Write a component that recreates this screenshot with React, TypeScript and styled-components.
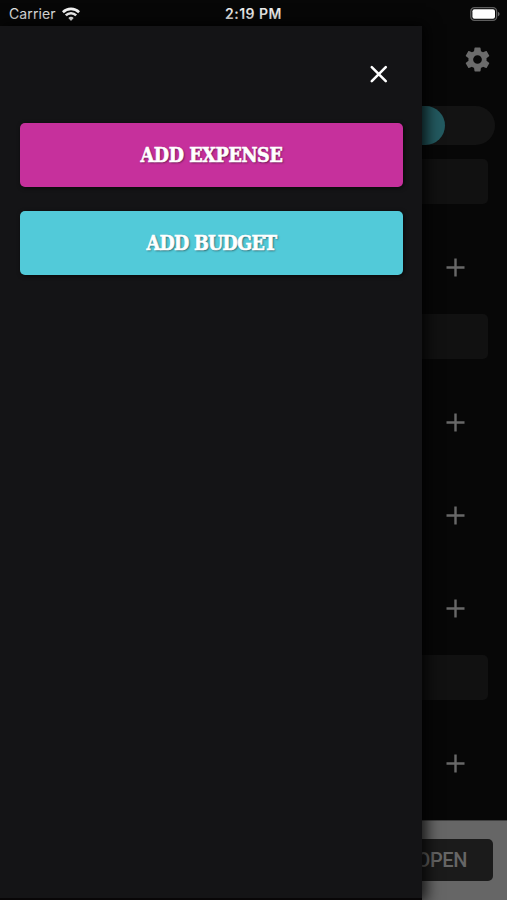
import React from "react";
import styled, { createGlobalStyle } from "styled-components";

const GlobalStyle = createGlobalStyle`
  * { box-sizing: border-box; }
  body { margin: 0; background: #070707; overflow: hidden; }
  button { font: inherit; border: 0; padding: 0; margin: 0; }
  svg { display: block; }
`;

const Screen = styled.div`
  position: relative;
  display: flex;
  flex-direction: column;
  width: 507px;
  height: 900px;
  overflow: hidden;
  background: #070707;
  font-family: Inter, "Liberation Sans", sans-serif;
`;

const StatusBar = styled.header`
  display: grid;
  grid-template-columns: 1fr auto 1fr;
  align-items: center;
  flex: none;
  height: 26px;
  padding: 0 7px 0 9px;
  color: #e2e2e2;
  font-size: 14px;
  line-height: 26px;
`;

const Carrier = styled.div`
  display: flex;
  align-items: center;
  gap: 6px;
  padding-top: 1px;
  letter-spacing: 0.1px;
`;

const Clock = styled.div`
  margin-right: 2px;
  padding-top: 1px;
  font-weight: 600;
  font-size: 14px;
  letter-spacing: 0.5px;
  color: #ededed;
`;

const Battery = styled.div`
  justify-self: end;
`;

const Toolbar = styled.div`
  display: flex;
  justify-content: flex-end;
  align-items: center;
  flex: none;
  height: 67px;
  padding-right: 15px;
  color: #6b6b6b;
`;

const Track = styled.div`
  flex: none;
  width: 483px;
  height: 39px;
  margin: 13px 0 14px 12px;
  border-radius: 20px;
  background: #131313;
`;

const TrackFill = styled.div`
  width: 433px;
  height: 39px;
  border-radius: 20px;
  background: #235a60;
`;

const CategoryTitle = styled.div`
  flex: none;
  height: 45px;
  margin: 0 19px 0 12px;
  border-radius: 5px;
  background: #111111;
`;

const Entries = styled.div`
  display: flex;
  flex-direction: column;
  flex: none;
  gap: 72px;
  padding: 53px 41px 36px 0;
`;

const Entry = styled.div`
  display: flex;
  justify-content: flex-end;
  height: 21px;
  color: #686868;
`;

const Footer = styled.footer`
  display: flex;
  justify-content: flex-end;
  align-items: flex-start;
  flex: none;
  height: 80px;
  margin-top: auto;
  padding: 18px 14px 0 0;
  background: #666666;
  border-top: 1px solid #404040;
`;

const OpenButton = styled.button`
  width: 106px;
  height: 42px;
  padding-right: 26px;
  border-radius: 5px;
  background: #1b1b1b;
  color: #666666;
  font-family: Roboto, "Liberation Sans", sans-serif;
  font-size: 20px;
  font-weight: 500;
  letter-spacing: -0.4px;
  text-align: right;
`;

const Drawer = styled.aside`
  position: absolute;
  top: 26px;
  left: 0;
  display: flex;
  flex-direction: column;
  width: 422px;
  height: 874px;
  background: #141416;
  border-bottom: 2px solid #080607;
  box-shadow: 2px 0 14px 2px rgba(0, 0, 0, 0.85);
`;

const DrawerHeader = styled.div`
  display: flex;
  justify-content: flex-end;
  height: 97px;
  padding: 34px 29.5px 0 0;
  color: #ffffff;
`;

const Actions = styled.div`
  display: flex;
  flex-direction: column;
  gap: 24px;
  padding: 0 19px 0 20px;
`;

const ActionButton = styled.button<{ $color: string }>`
  display: flex;
  align-items: center;
  justify-content: center;
  height: 64px;
  padding-top: 1px;
  border-radius: 5px;
  background: ${(p) => p.$color};
  box-shadow: 1px 1px 4px rgba(0, 0, 0, 0.65);
  color: #ffffff;
`;

const Label = styled.span<{ $tracking: number }>`
  font-family: "DejaVu Serif Condensed", "DejaVu Serif", serif;
  font-stretch: condensed;
  font-size: 19.5px;
  font-weight: 700;
  line-height: 24px;
  white-space: nowrap;
  letter-spacing: ${(p) => p.$tracking}px;
  -webkit-text-stroke: 0.6px #ffffff;
  text-shadow: 1px 1px 2px rgba(0, 0, 0, 0.55);
`;

const PlusIcon = () => (
  <svg width="21" height="21" viewBox="0 0 21 21" fill="none" stroke="currentColor" strokeWidth="2.4">
    <path d="M10.5 1.5v18M1.5 10.5h18" />
  </svg>
);

const CloseIcon = () => (
  <svg width="28" height="28" viewBox="0 0 24 24" fill="none" stroke="currentColor" strokeWidth="2.2" strokeLinecap="round">
    <path d="M5.8 6.1 17.8 18.1M17.8 6.1 5.8 18.1" />
  </svg>
);

const GearIcon = () => (
  <svg width="29" height="29" viewBox="0 0 24 24" fill="currentColor">
    <path d="M19.43 12.98c.04-.32.07-.64.07-.98s-.03-.66-.07-.98l2.11-1.65c.19-.15.24-.42.12-.64l-2-3.46c-.12-.22-.39-.3-.61-.22l-2.49 1c-.52-.4-1.08-.73-1.69-.98l-.38-2.65C14.46 2.18 14.25 2 14 2h-4c-.25 0-.46.18-.49.42l-.38 2.65c-.61.25-1.17.59-1.69.98l-2.49-1c-.23-.09-.49 0-.61.22l-2 3.46c-.13.22-.07.49.12.64l2.11 1.65c-.04.32-.07.65-.07.98s.03.66.07.98l-2.11 1.65c-.19.15-.24.42-.12.64l2 3.46c.12.22.39.3.61.22l2.49-1c.52.4 1.08.73 1.69.98l.38 2.65c.03.24.24.42.49.42h4c.25 0 .46-.18.49-.42l.38-2.65c.61-.25 1.17-.59 1.69-.98l2.49 1c.23.09.49 0 .61-.22l2-3.46c.12-.22.07-.49-.12-.64l-2.11-1.65zM12 15.6A3.6 3.6 0 1 1 12 8.4a3.6 3.6 0 0 1 0 7.2z" />
  </svg>
);

const WifiIcon = () => (
  <svg width="18" height="14" viewBox="0 0 18 14" fill="none" stroke="#f4f4f4" strokeWidth="2.6">
    <path d="M.9 5.2a11.6 11.6 0 0 1 16.2 0M3.8 8.4a7.4 7.4 0 0 1 10.4 0" />
    <path d="M9 13.9 6.3 11.1a3.8 3.8 0 0 1 5.4 0z" fill="#f4f4f4" stroke="none" />
  </svg>
);

const BatteryIcon = () => (
  <svg width="30" height="14" viewBox="0 0 30 14">
    <rect x=".8" y=".7" width="25.8" height="12.6" rx="3.6" fill="none" stroke="#5e5e5e" strokeWidth="1.3" />
    <rect x="2.4" y="2.3" width="22.6" height="9.4" rx="2" fill="#ffffff" />
    <path d="M27.9 4.7c2.2.8 2.2 3.8 0 4.6z" fill="#6a6a6a" />
  </svg>
);

const categories = [1, 3, 1];

export default function App() {
  return (
    <Screen>
      <GlobalStyle />
      <StatusBar>
        <Carrier>
          Carrier
          <WifiIcon />
        </Carrier>
        <Clock>2:19 PM</Clock>
        <Battery>
          <BatteryIcon />
        </Battery>
      </StatusBar>
      <Toolbar>
        <GearIcon />
      </Toolbar>
      <Track>
        <TrackFill />
      </Track>
      {categories.map((count, index) => (
        <React.Fragment key={index}>
          <CategoryTitle />
          <Entries>
            {Array.from({ length: count }, (_, n) => (
              <Entry key={n}>
                <PlusIcon />
              </Entry>
            ))}
          </Entries>
        </React.Fragment>
      ))}
      <Footer>
        <OpenButton>OPEN</OpenButton>
      </Footer>
      <Drawer>
        <DrawerHeader>
          <CloseIcon />
        </DrawerHeader>
        <Actions>
          <ActionButton $color="#c6309c">
            <Label $tracking={-0.35}>ADD EXPENSE</Label>
          </ActionButton>
          <ActionButton $color="#52cad9">
            <Label $tracking={-0.7}>ADD BUDGET</Label>
          </ActionButton>
        </Actions>
      </Drawer>
    </Screen>
  );
}
